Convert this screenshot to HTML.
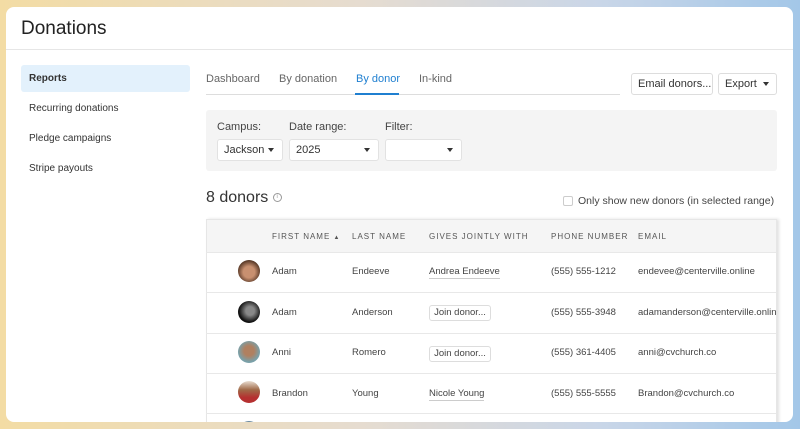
<!DOCTYPE html>
<html><head><style>
*{box-sizing:border-box;margin:0;padding:0}
body{width:800px;height:429px;overflow:hidden;font-family:"Liberation Sans",sans-serif;color:#333;background:linear-gradient(90deg,#f3dca4 0%,#e6dcd0 45%,#c9d6e8 75%,#a3c7e8 100%);position:relative}
.card{position:absolute;left:6px;top:7px;width:787px;height:415px;background:#fff;border-radius:8px;overflow:hidden}
.abs{position:absolute}
h1{position:absolute;left:15px;top:11px;font-size:19px;font-weight:normal;color:#222}
.hdr{position:absolute;left:0;top:42px;width:100%;border-top:1px solid #e6e6e6}
.nav{position:absolute;left:15px;font-size:10px;color:#333;padding-left:8px;width:169px;height:27px;line-height:27px}
.tab{position:absolute;top:65px;font-size:11px;color:#666}
.btn{position:absolute;top:66px;height:22px;border:1px solid #ddd;border-radius:3px;font-size:11px;line-height:20px;padding:0 6px;color:#333;background:#fff;white-space:nowrap}
.tri{display:inline-block;width:0;height:0;border-left:3px solid transparent;border-right:3px solid transparent;border-top:4px solid #333;vertical-align:middle;margin-left:6px}
.sel{position:absolute;top:132px;height:22px;background:#fff;border:1px solid #e2e2e2;border-radius:3px;font-size:11px;line-height:20px;padding-left:6px}
.sel .tri{position:absolute;right:8px;top:8px;margin:0}
.lbl{position:absolute;top:114px;font-size:11px;color:#444}
.th{position:absolute;top:225px;font-size:8px;letter-spacing:1px;color:#555}
.td{position:absolute;font-size:9.5px;color:#444}
.row{position:absolute;left:200px;width:570px;border-top:1px solid #e8e8e8}
.av{position:absolute;left:232px;width:22px;height:22px;border-radius:50%}
.link{border-bottom:1px solid #ccc;padding-bottom:1px}
.join{position:absolute;left:423px;width:62px;height:16px;border:1px solid #ddd;border-radius:3px;font-size:9.5px;line-height:14px;text-align:center;color:#444}
</style></head><body>
<div class="card">
<h1>Donations</h1>
<div class="hdr"></div>
<div class="nav" style="top:58px;background:#e3f1fc;border-radius:3px;font-weight:bold">Reports</div>
<div class="nav" style="top:88px">Recurring donations</div>
<div class="nav" style="top:118px">Pledge campaigns</div>
<div class="nav" style="top:148px">Stripe payouts</div>

<div class="abs" style="left:200px;top:87px;width:414px;border-top:1px solid #ddd"></div>
<div class="tab" style="left:200px;top:66px">Dashboard</div>
<div class="tab" style="left:273px;top:66px">By donation</div>
<div class="tab" style="left:350px;top:66px;color:#1f7fd0">By donor</div>
<div class="abs" style="left:349px;top:86px;width:44px;height:2px;background:#1f7fd0"></div>
<div class="tab" style="left:413px;top:66px">In-kind</div>
<div class="btn" style="left:625px;width:82px">Email donors...</div>
<div class="btn" style="left:712px;width:59px">Export<span class="tri"></span></div>

<div class="abs" style="left:200px;top:103px;width:571px;height:61px;background:#f4f4f4;border-radius:3px"></div>
<div class="lbl" style="left:211px">Campus:</div>
<div class="lbl" style="left:283px">Date range:</div>
<div class="lbl" style="left:379px">Filter:</div>
<div class="sel" style="left:211px;width:66px">Jackson<span class="tri"></span></div>
<div class="sel" style="left:283px;width:90px">2025<span class="tri"></span></div>
<div class="sel" style="left:379px;width:77px"><span class="tri"></span></div>

<div class="abs" style="left:200px;top:182px;font-size:16px;color:#333">8 donors <span style="display:inline-block;width:9px;height:9px;border:1px solid #999;border-radius:50%;font-size:6px;line-height:7px;text-align:center;color:#999;vertical-align:middle">i</span></div>
<div class="abs" style="left:557px;top:189px;width:10px;height:10px;border:1px solid #ccc;border-radius:2px"></div>
<div class="abs" style="left:572px;top:188px;font-size:10.5px;color:#444">Only show new donors (in selected range)</div>

<div class="abs" style="left:200px;top:212px;width:571px;height:210px;border:1px solid #e6e6e6;border-bottom:none;box-shadow:2px 0 3px rgba(0,0,0,0.12)"></div>
<div class="abs" style="left:201px;top:213px;width:569px;height:33px;background:#f5f5f5"></div>
<div class="th" style="left:266px">FIRST NAME <span style="font-size:6px">▲</span></div>
<div class="th" style="left:346px">LAST NAME</div>
<div class="th" style="left:423px">GIVES JOINTLY WITH</div>
<div class="th" style="left:545px">PHONE NUMBER</div>
<div class="th" style="left:632px">EMAIL</div>

<div class="row" style="top:245px"></div>
<div class="row" style="top:285px"></div>
<div class="row" style="top:326px"></div>
<div class="row" style="top:366px"></div>
<div class="row" style="top:406px"></div>

<div class="av" style="top:253px;background:radial-gradient(circle at 50% 55%,#c89070 35%,#5a3a28 70%)"></div>
<div class="av" style="top:294px;background:radial-gradient(circle at 55% 45%,#888 25%,#111 65%)"></div>
<div class="av" style="top:334px;background:radial-gradient(circle at 50% 45%,#b08060 30%,#7aa0a8 65%)"></div>
<div class="av" style="top:374px;background:linear-gradient(180deg,#e8ddd0 0%,#a06a48 40%,#b53030 75%)"></div>
<div class="av" style="top:414px;background:#6a8aa0"></div>

<div class="td" style="left:266px;top:259px">Adam</div>
<div class="td" style="left:346px;top:259px">Endeeve</div>
<div class="td" style="left:423px;top:259px"><span class="link">Andrea Endeeve</span></div>
<div class="td" style="left:545px;top:259px">(555) 555-1212</div>
<div class="td" style="left:632px;top:259px">endevee@centerville.online</div>

<div class="td" style="left:266px;top:300px">Adam</div>
<div class="td" style="left:346px;top:300px">Anderson</div>
<div class="join" style="top:298px">Join donor...</div>
<div class="td" style="left:545px;top:300px">(555) 555-3948</div>
<div class="td" style="left:632px;top:300px;width:138px;overflow:hidden;white-space:nowrap">adamanderson@centerville.online</div>

<div class="td" style="left:266px;top:340px">Anni</div>
<div class="td" style="left:346px;top:340px">Romero</div>
<div class="join" style="top:339px">Join donor...</div>
<div class="td" style="left:545px;top:340px">(555) 361-4405</div>
<div class="td" style="left:632px;top:340px">anni@cvchurch.co</div>

<div class="td" style="left:266px;top:381px">Brandon</div>
<div class="td" style="left:346px;top:381px">Young</div>
<div class="td" style="left:423px;top:381px"><span class="link">Nicole Young</span></div>
<div class="td" style="left:545px;top:381px">(555) 555-5555</div>
<div class="td" style="left:632px;top:381px">Brandon@cvchurch.co</div>
</div>
</body></html>
